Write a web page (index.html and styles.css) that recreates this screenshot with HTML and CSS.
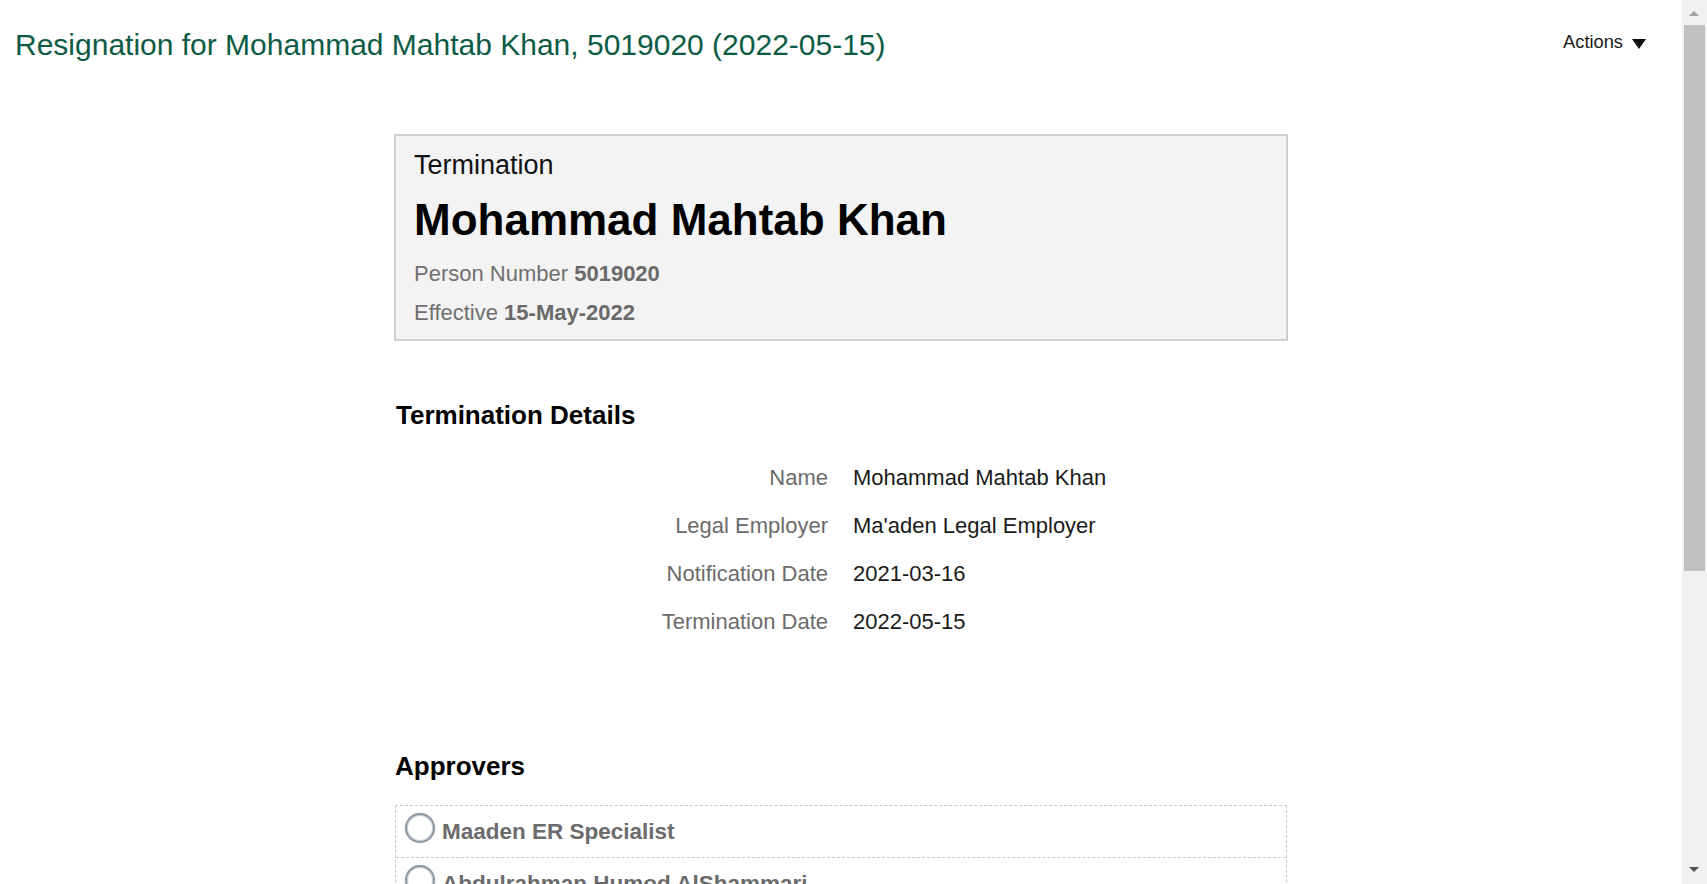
FILE: index.html
```html
<!DOCTYPE html>
<html lang="en">
<head>
<meta charset="utf-8">
<title>Resignation for Mohammad Mahtab Khan</title>
<link rel="stylesheet" href="styles.css">
</head>
<body>
<div class="page">
  <header class="topbar">
    <h1 class="page-title">Resignation for Mohammad Mahtab Khan, 5019020 (2022-05-15)</h1>
    <div class="actions">Actions <span class="caret"></span></div>
  </header>

  <main class="content">
    <section class="summary-card">
      <div class="summary-type">Termination</div>
      <div class="summary-name">Mohammad Mahtab Khan</div>
      <div class="summary-meta">Person Number <b>5019020</b></div>
      <div class="summary-meta">Effective <b>15-May-2022</b></div>
    </section>

    <section class="details">
      <h2 class="section-title">Termination Details</h2>
      <div class="form-grid">
        <div class="form-label">Name</div><div class="form-value">Mohammad Mahtab Khan</div>
        <div class="form-label">Legal Employer</div><div class="form-value">Ma'aden Legal Employer</div>
        <div class="form-label">Notification Date</div><div class="form-value">2021-03-16</div>
        <div class="form-label">Termination Date</div><div class="form-value">2022-05-15</div>
      </div>
    </section>

    <section class="approvers">
      <h2 class="section-title">Approvers</h2>
      <div class="approver-list">
        <div class="approver-row"><span class="radio"></span><span class="approver-name">Maaden ER Specialist</span></div>
        <div class="approver-row"><span class="radio"></span><span class="approver-name">Abdulrahman Humod AlShammari</span></div>
        <div class="approver-row"><span class="radio"></span><span class="approver-name">Maaden HR Director</span></div>
      </div>
    </section>
  </main>
</div>

<div class="scrollbar">
  <span class="sb-arrow sb-up"></span>
  <span class="sb-thumb"></span>
  <span class="sb-arrow sb-down"></span>
</div>
</body>
</html>
```

FILE: styles.css
```css
html, body {
  margin: 0;
  padding: 0;
  height: 884px;
  overflow: hidden;
  background: #ffffff;
}

body {
  font-family: "Liberation Sans", Arial, sans-serif;
  color: #1a1a1a;
}

.page {
  width: 1682px;
}

.topbar {
  display: flex;
  justify-content: space-between;
  align-items: flex-start;
  padding: 27px 36px 0 15px;
}

.page-title {
  margin: 0;
  font-size: 30px;
  line-height: 36px;
  font-weight: normal;
  color: #0d5b45;
}

.actions {
  margin-top: 4px;
  font-size: 18.3px;
  line-height: 22px;
  color: #1a1a1a;
  display: flex;
  align-items: center;
  gap: 9px;
}

.caret {
  width: 0;
  height: 0;
  border-left: 7px solid transparent;
  border-right: 7px solid transparent;
  border-top: 10px solid #111;
  margin-top: 3px;
}

.content {
  width: 894px;
  margin: 0 auto;
  padding-top: 71px;
}

.summary-card {
  border: 2px solid #cfcfcf;
  background: #f3f3f3;
  padding: 13px 18px 10px 18px;
  height: 207px;
  box-sizing: border-box;
}

.summary-type {
  font-size: 27px;
  line-height: 32px;
  color: #111;
}

.summary-name {
  margin-top: 13px;
  font-size: 44px;
  line-height: 52px;
  font-weight: bold;
  color: #000;
}

.summary-meta {
  font-size: 22px;
  line-height: 39px;
  color: #707070;
}

.summary-name + .summary-meta {
  margin-top: 8px;
}

.summary-meta b {
  color: #6a6a6a;
}

.section-title {
  margin: 0;
  padding-left: 2px;
  font-size: 26px;
  line-height: 32px;
  font-weight: bold;
  color: #000;
}

.details {
  margin-top: 58px;
}

.form-grid {
  margin-top: 23px;
  display: grid;
  grid-template-columns: 434px 1fr;
  column-gap: 25px;
  font-size: 22px;
  line-height: 48px;
}

.form-label {
  text-align: right;
  color: #6b6b6b;
}

.form-value {
  color: #1a1a1a;
}

.approvers {
  margin-top: 104px;
}

.approvers .section-title {
  padding-left: 1px;
}

.approver-list {
  margin-top: 23px;
  border: 1px dashed #c8c8c8;
  margin-left: 1px;
  margin-right: 1px;
}

.approver-row {
  display: flex;
  align-items: flex-start;
  gap: 7px;
  height: 51px;
  box-sizing: border-box;
  padding: 7px 9px 0 9px;
}

.approver-row + .approver-row {
  border-top: 1px dashed #c8c8c8;
  height: 52px;
}

.radio {
  flex: none;
  width: 30px;
  height: 30px;
  box-sizing: border-box;
  border-radius: 50%;
  border: 2px solid #8d99a4;
  background: #fff;
  box-shadow: inset 0 0 0 1px #c3cbd2, 0 0 1px 0 #b8c0c7;
}

.approver-name {
  margin-top: 4px;
  font-size: 22.5px;
  line-height: 30px;
  font-weight: bold;
  color: #6b6b6b;
}

.scrollbar {
  position: fixed;
  top: 0;
  right: 0;
  width: 25px;
  height: 884px;
  background: #f1f1f1;
}

.sb-thumb {
  position: absolute;
  left: 2px;
  top: 25px;
  width: 21px;
  height: 546px;
  background: #c1c1c1;
}

.sb-arrow {
  position: absolute;
  left: 7px;
  width: 0;
  height: 0;
  border-left: 5.5px solid transparent;
  border-right: 5.5px solid transparent;
}

.sb-up {
  top: 11px;
  border-bottom: 5px solid #a3a3a3;
}

.sb-down {
  top: 867px;
  border-top: 5px solid #505050;
}
```
